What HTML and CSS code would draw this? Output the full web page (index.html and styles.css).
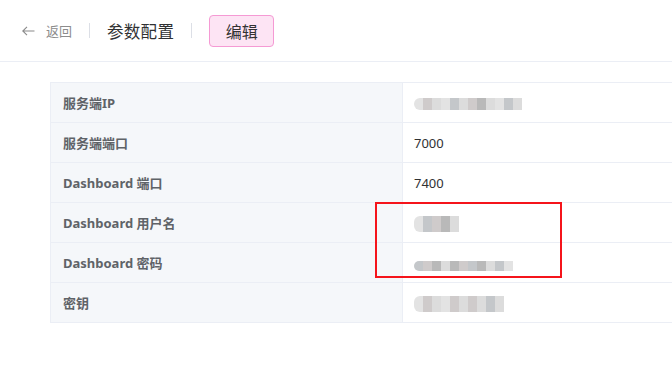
FILE: index.html
```html
<!DOCTYPE html>
<html lang="zh-CN">
<head>
  <meta charset="UTF-8" />
  <title>参数配置</title>
  <link rel="stylesheet" href="styles.css">
</head>
<body>

  <!-- 顶部导航 -->
  <div class="page-header">
    <a class="back" href="#">
      <svg width="13" height="10" viewBox="0 0 13 10" aria-hidden="true">
        <path d="M12.5 5H1M5 0.8L0.8 5L5 9.2" fill="none" stroke="#8a8a8a" stroke-width="1.1"/>
      </svg>
      <span>返回</span>
    </a>
    <span class="divider"></span>
    <span class="title">参数配置</span>
    <span class="divider"></span>
    <span class="edit-btn">编辑</span>
  </div>

  <!-- 参数表 -->
  <div class="content">
    <table class="desc">
      <tr>
        <th>服务端IP</th>
        <td><span class="mask m-ip"><i class="a"></i><i class="b"></i><i class="c"></i><i class="a"></i><i class="d"></i><i class="c"></i><i class="b"></i><i class="e"></i><i class="c"></i><i class="a"></i><i class="d"></i><i class="c"></i></span></td>
      </tr>
      <tr>
        <th>服务端端口</th>
        <td>7000</td>
      </tr>
      <tr>
        <th>Dashboard 端口</th>
        <td>7400</td>
      </tr>
      <tr>
        <th>Dashboard 用户名</th>
        <td><span class="mask m-user"><i class="a"></i><i class="d"></i><i class="b"></i><i class="e"></i><i class="c"></i></span></td>
      </tr>
      <tr>
        <th>Dashboard 密码</th>
        <td><span class="mask m-pass"><i class="d"></i><i class="b"></i><i class="e"></i><i class="c"></i><i class="e"></i><i class="b"></i><i class="d"></i><i class="e"></i><i class="c"></i><i class="d"></i><i class="a"></i></span></td>
      </tr>
      <tr>
        <th>密钥</th>
        <td><span class="mask m-key"><i class="a"></i><i class="b"></i><i class="c"></i><i class="a"></i><i class="b"></i><i class="c"></i><i class="b"></i><i class="c"></i><i class="d"></i><i class="c"></i></span></td>
      </tr>
    </table>
  </div>

  <!-- 标注框 -->
  <div class="mark-box"></div>

</body>
</html>
```

FILE: styles.css
```css
body {
  margin: 0;
  background: #fff;
  font-family: "Noto Sans", "Noto Sans CJK SC", sans-serif;
  color: #303133;
  overflow: hidden;
  width: 672px;
  height: 383px;
  position: relative;
}

.page-header {
  height: 61px;
  border-bottom: 1px solid #ebeef5;
  display: flex;
  align-items: center;
  padding-left: 22px;
}

.back {
  display: flex;
  align-items: center;
  gap: 11px;
  color: #8c8c8c;
  font-size: 13px;
  text-decoration: none;
}

.divider {
  width: 1px;
  height: 15px;
  background: #dcdfe6;
  margin: 0 17px;
}

.title {
  font-size: 16.5px;
  letter-spacing: 0.3px;
  color: #303133;
}

.edit-btn {
  display: inline-flex;
  align-items: center;
  justify-content: center;
  width: 63px;
  height: 30px;
  border: 1px solid #f59ad4;
  border-radius: 4px;
  background: #fde4f4;
  font-size: 16px;
  color: #333;
}

.content {
  padding: 20px 0 0 50px;
}

.desc {
  border-collapse: collapse;
  width: 622px;
  font-size: 13px;
}

.desc th,
.desc td {
  height: 39px;
  padding: 0 12px;
  border: 1px solid #ebeef5;
  text-align: left;
}

.desc th {
  width: 327px;
  background: #f5f7fa;
  color: #5f6368;
  font-weight: bold;
}

.desc td {
  padding-left: 11px;
  border-right: none;
  color: #303133;
}

/* 打码 */
.mask {
  display: inline-flex;
  height: 12px;
  vertical-align: middle;
  border-radius: 6px 0 0 6px;
  overflow: hidden;
  filter: blur(0.4px);
}

.mask i {
  width: 9px;
  height: 100%;
}

.mask .a { background: #e3e3e3; }
.mask .b { background: #cfcbcb; }
.mask .c { background: #dcdcdc; }
.mask .d { background: #c4c7ca; }
.mask .e { background: #b9b9b9; }

.m-user { height: 16px; }
.m-pass { height: 10px; margin-top: 4px; }
.m-key { height: 16px; }

.mark-box {
  position: absolute;
  left: 375px;
  top: 202px;
  width: 183px;
  height: 72px;
  border: 2px solid #f5141b;
}
```
